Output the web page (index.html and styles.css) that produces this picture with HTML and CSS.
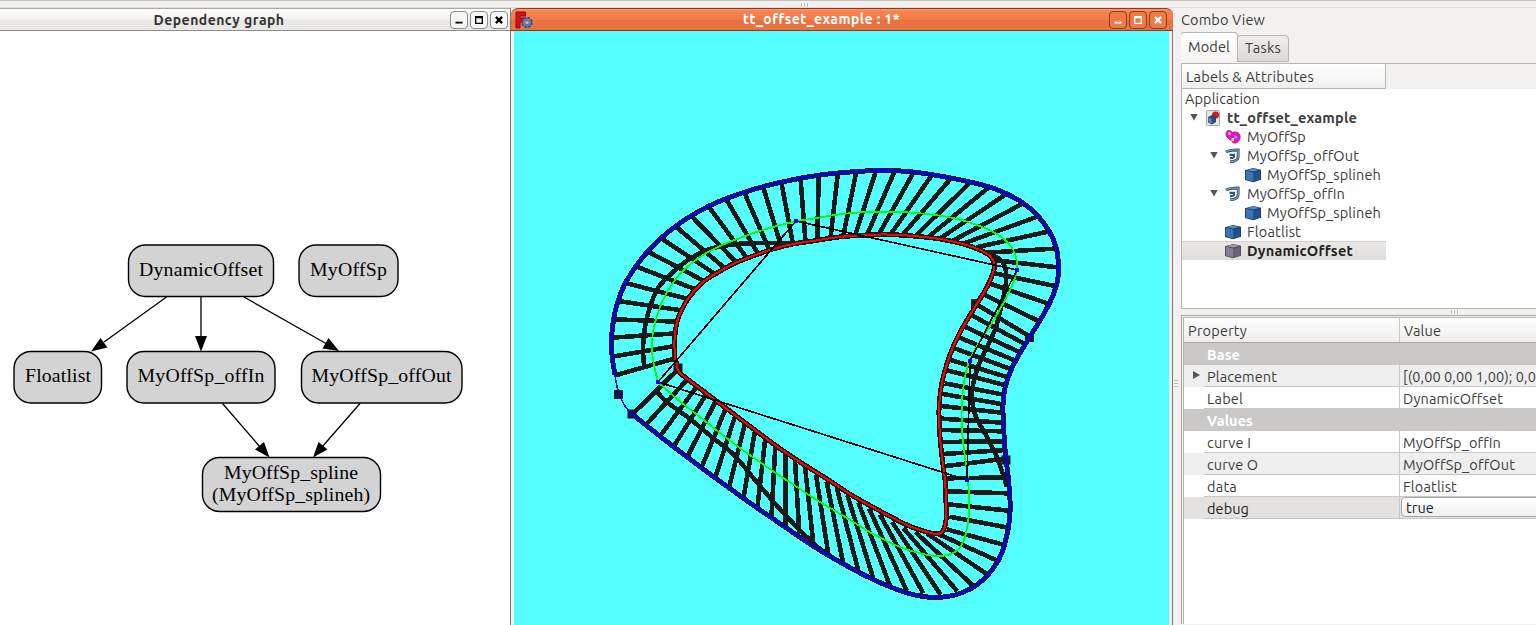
FILE: index.html
```html
<!DOCTYPE html>
<html lang="en">
<head>
<meta charset="utf-8">
<title>tt_offset_example</title>
<link rel="stylesheet" href="styles.css">
</head>
<body>
<svg class="defs" width="0" height="0">
  <defs>
    <symbol id="cube" viewBox="0 0 16 16"><path d="M0 3.200 8 1l8 1.700v10L8 15.200 0 13z" fill="#16386b"/><path d="M.8 3.800 8.500 5.400V14.400L.8 12.500z" fill="#3d74b5"/><path d="M9.200 5.400 15.300 3.600v8.800L9.200 14.400z" fill="#24508c"/><path d="M1.500 3.200 8 1.600l6.300 1.300L8.600 4.600z" fill="#5b8cc4"/></symbol>
    <symbol id="cube-off" viewBox="0 0 16 16"><path d="M0 3.200 8 1l8 1.700v10L8 15.200 0 13z" fill="#4d4459"/><path d="M.8 3.800 8.500 5.400V14.400L.8 12.500z" fill="#867f94"/><path d="M9.200 5.400 15.300 3.600v8.800L9.200 14.400z" fill="#6b627a"/><path d="M1.500 3.200 8 1.600l6.300 1.300L8.600 4.600z" fill="#a19bad"/></symbol>
    <symbol id="offset" viewBox="0 0 16 16"><g fill="none" stroke="#34557f" stroke-width="2.800"><path d="M1 4.200C4 1.900 8 1.900 13.200 2v6.500c0 3.500-3 5.200-8.200 5.200"/><path d="M4.500 6.800H9V8.500c0 1.300-1.500 1.600-4 1.600" stroke-width="2.200"/></g><g fill="none" stroke="#8ba9c9" stroke-width="1"><path d="M1 4.200C4 1.900 8 1.900 13.200 2v6.500c0 3.500-3 5.200-8.200 5.200"/></g></symbol>
    <symbol id="heart" viewBox="0 0 16 16"><path d="M1 5C1 1 5 .5 7.500 3.500 11 2 16 4 15 9c-.5 4-4 5.500-6.500 5C7 11 1 9.500 1 5z" fill="#f0d" stroke="#8b3a5a"/><circle cx="4.500" cy="4.500" r="1.500" fill="#f7c8a0"/><path d="M6.500 9h2.500v3H6.500z" fill="#ffe02a"/><path d="M10 6l3 2-2 2-2-1z" fill="#35c5f2"/></symbol>
    <symbol id="doc" viewBox="0 0 16 16"><rect x="1.500" y=".5" width="13" height="15" rx="1" fill="#e6e6e6" stroke="#a3a3a3"/><circle cx="10.500" cy="5" r="3.500" fill="#d8141c"/><path d="M3 7l4-2 4 2v5l-4 2.500L3 12.500z" fill="#2a4a7c"/><path d="M3.500 7.300 6.500 8.500v4.800l-3-1.300z" fill="#5a8bc4"/></symbol>
    <symbol id="app" viewBox="0 0 18 18"><path d="M1 1h9.500v4H5v2h4v4H5v6H1z" fill="#d41313" stroke="#8d0d0d"/><circle cx="12" cy="11.500" r="4.800" fill="none" stroke="#2e4d85" stroke-width="2" stroke-dasharray="2.200 1.570"/><circle cx="12" cy="11.500" r="3.300" fill="none" stroke="#2e4d85" stroke-width="3"/><circle cx="12" cy="11.500" r="3.200" fill="none" stroke="#5b87c8" stroke-width="1.700"/><circle cx="12" cy="11.500" r="1.700" fill="#f3a27e"/></symbol>
    <symbol id="min" viewBox="0 0 18 18"><path d="M5 12h8" stroke="currentColor" stroke-width="2"/></symbol>
    <symbol id="max" viewBox="0 0 18 18"><path d="M4.500 4.500h9v9h-9zM6 7v5h6V7z" fill="currentColor" fill-rule="evenodd"/></symbol>
    <symbol id="close" viewBox="0 0 18 18"><path d="M5.500 5.500l7 7M12.500 5.500l-7 7" stroke="currentColor" stroke-width="2.500"/></symbol>
  </defs>
</svg>

<main class="desktop">
  <div class="topstrip"><i class="grip"></i></div>
  <section class="window graph">
    <header class="titlebar"><h1 class="caption"><span class="t" data-w="131">Dependency graph</span></h1>
      <div class="buttons"><svg class="btn"><use href="#min"/></svg><svg class="btn"><use href="#max"/></svg><svg class="btn"><use href="#close"/></svg></div>
    </header>
    <svg class="canvas" viewBox="0 31 510 594">
      <g class="box"><rect x="128.500" y="245" width="145" height="51.500" rx="17"/><rect x="299" y="245" width="99" height="51.500" rx="17"/><rect x="14" y="351.500" width="87.500" height="51.500" rx="17"/><rect x="127" y="351.500" width="148" height="51.500" rx="17"/><rect x="301.500" y="351.500" width="160.500" height="51.500" rx="17"/><rect x="202.500" y="457.500" width="178" height="54" rx="17"/></g>
      <g class="edge"><path d="M166.500 297 104 342M201 297V337M244 297 326 343.500M222.500 403.500 260 447M360 403.500 322 447"/></g>
      <g class="arrow"><path d="M91 351.500 100.500 338 107.500 347.500zM195 336h12L201 351.500zM339 351 322.500 348.500 328.500 338zM269.500 457.500 255 449.500 264 442zM313 457.500 318.500 442 327.500 449.500z"/></g>
      <g class="label"><text x="201" y="276" textLength="124">DynamicOffset</text><text x="348.500" y="276" textLength="77">MyOffSp</text><text x="58" y="382" textLength="66">Floatlist</text><text x="201" y="382" textLength="127">MyOffSp_offIn</text><text x="381.500" y="382" textLength="140">MyOffSp_offOut</text><text x="291" y="479" textLength="134">MyOffSp_spline</text><text x="291" y="500.500" textLength="158">(MyOffSp_splineh)</text></g>
    </svg>
  </section>

  <section class="window view">
    <header class="titlebar active"><svg class="appicon"><use href="#app"/></svg><h1 class="caption"><span class="t" data-w="157">tt_offset_example : 1*</span></h1>
      <div class="buttons"><svg class="btn"><use href="#min"/></svg><svg class="btn"><use href="#max"/></svg><svg class="btn"><use href="#close"/></svg></div>
    </header>
    <div class="frame"><svg class="canvas scene" id="scene" viewBox="514 31 655 594"></svg></div>
  </section>

  <div class="splitter"><i class="grip vertical"></i></div>

  <aside class="combo">
    <h2 class="dock-title"><span class="t" data-w="84">Combo View</span></h2>
    <nav class="tabs"><div class="tab on"><span class="t" data-w="42">Model</span></div><div class="tab"><span class="t" data-w="36">Tasks</span></div></nav>
    <div class="tree">
      <div class="tree-head"><div class="col"><span class="t" data-w="128">Labels &amp; Attributes</span></div></div>
      <ul class="rows">
        <li class="row l0"><span class="t" data-w="75">Application</span></li>
        <li class="row l1"><i class="down"></i><svg class="ic"><use href="#doc"/></svg><b class="t" data-w="130">tt_offset_example</b></li>
        <li class="row l2"><i class="none"></i><svg class="ic"><use href="#heart"/></svg><span class="t" data-w="59">MyOffSp</span></li>
        <li class="row l2"><i class="down"></i><svg class="ic"><use href="#offset"/></svg><span class="t" data-w="112">MyOffSp_offOut</span></li>
        <li class="row l3"><i class="none"></i><svg class="ic"><use href="#cube"/></svg><span class="t" data-w="114">MyOffSp_splineh</span></li>
        <li class="row l2"><i class="down"></i><svg class="ic"><use href="#offset"/></svg><span class="t" data-w="98">MyOffSp_offIn</span></li>
        <li class="row l3"><i class="none"></i><svg class="ic"><use href="#cube"/></svg><span class="t" data-w="114">MyOffSp_splineh</span></li>
        <li class="row l2"><i class="none"></i><svg class="ic"><use href="#cube"/></svg><span class="t" data-w="54">Floatlist</span></li>
        <li class="row l2 selected"><i class="none"></i><svg class="ic"><use href="#cube-off"/></svg><b class="t" data-w="106">DynamicOffset</b></li>
      </ul>
    </div>
    <div class="hsplit"><i class="grip"></i></div>
    <div class="props">
      <div class="prow head"><div class="name"><span class="t" data-w="59">Property</span></div><div class="value"><span class="t" data-w="37">Value</span></div></div>
      <div class="prow group"><b class="t" data-w="33">Base</b></div>
      <div class="prow alt"><i class="right"></i><div class="name"><span class="t" data-w="70">Placement</span></div><div class="value"><span class="t" data-w="133">[(0,00 0,00 1,00); 0,0</span></div></div>
      <div class="prow"><div class="name"><span class="t" data-w="36">Label</span></div><div class="value"><span class="t" data-w="100">DynamicOffset</span></div></div>
      <div class="prow group"><b class="t" data-w="46">Values</b></div>
      <div class="prow"><div class="name"><span class="t" data-w="44">curve I</span></div><div class="value"><span class="t" data-w="98">MyOffSp_offIn</span></div></div>
      <div class="prow alt"><div class="name"><span class="t" data-w="51">curve O</span></div><div class="value"><span class="t" data-w="112">MyOffSp_offOut</span></div></div>
      <div class="prow"><div class="name"><span class="t" data-w="30">data</span></div><div class="value"><span class="t" data-w="54">Floatlist</span></div></div>
      <div class="prow current"><div class="name"><span class="t" data-w="42">debug</span></div><div class="value"><div class="combo-box"><span class="t" data-w="28">true</span></div></div></div>
    </div>
  </aside>
</main>
<script src="scene.js"></script>
</body>
</html>
```
FILE: styles.css
```css
* { box-sizing: border-box; }
body { margin: 0; width: 1536px; height: 625px; overflow: hidden; background: #f2f1f0; color: #3c3c3c; font: 14.500px/19px Ubuntu, "Noto Sans", sans-serif; }
.defs { display: block; height: 0; }
.desktop { display: grid; grid-template: 8px 617px / 511px 662px 8px 355px; }
.topstrip { grid-column: 1 / -1; border-bottom: 1px solid #dedbd8; box-shadow: inset 0 1px #c4c0bb; display: flex; padding: 3px 0 0 801px; }
.grip { display: block; width: 8px; height: 4px; background: repeating-linear-gradient(90deg, #bdb9b5 0 1px, #fafafa 1px 3px); }
.grip.vertical { width: 4px; height: 8px; background: repeating-linear-gradient(#bdb9b5 0 1px, #fafafa 1px 3px); }
.t { display: inline-block; white-space: pre; }

.window { display: flex; flex-direction: column; overflow: hidden; }
.graph { background: #fff; border-right: 1px solid #777; }
.titlebar { height: 23px; flex: none; display: flex; align-items: center; background: linear-gradient(#fff, #f4f3f2 48%, #eae9e7 52%, #e9e8e6); border-top: 1px solid #aaa; border-bottom: 1px solid #8e8e8e; color: #333; }
.caption { flex: 1; margin: 0; font: bold 14px/20px Ubuntu, "Noto Sans", sans-serif; text-align: center; }
.graph .caption { padding-right: 12px; }
.buttons { display: flex; gap: 2px; padding-right: 2px; }
.btn { width: 18px; height: 18px; border: 1px solid #8c8c8c; border-radius: 4px; background: #f7f7f6; color: #000; }
.titlebar.active { border-color: #8d3b1b; border-radius: 7px 7px 0 0; background: linear-gradient(#ff9a6a, #f7814f 12%, #f17c4b 50%, #e87140 52%, #e87442); color: #fff; }
.view .btn { background: #ed7b49; border-color: #8f3c1c; color: #fff; }
.view .buttons { padding-right: 6px; }
.view .caption { padding: 0 0 2px 1px; }
.appicon { width: 18px; height: 18px; margin-left: 4px; }
.canvas { display: block; width: 510px; height: 594px; flex: none; }
.frame { padding: 0 3px; background: #f2f1f0; border-right: 1px solid #777; }
.scene { width: 655px; background: #55ffff; }

.box rect { fill: #d3d3d3; stroke: #000; stroke-width: 1.400; }
.edge path { fill: none; stroke: #000; stroke-width: 1.300; }
.label text { font: 19.800px "Liberation Serif", serif; text-anchor: middle; fill: #000; }

.scene path { fill: none; }
.ribs, .mid { stroke: #1a1a1a; stroke-width: 4.600; shape-rendering: crispEdges; }
.edge-dark { stroke: #1a1a1a; stroke-width: 5; shape-rendering: crispEdges; }
.outer { stroke: #0000ff; stroke-width: 2.300; shape-rendering: crispEdges; }
.outer.thin { stroke-width: 1.500; }
.inner { stroke: #ff0000; stroke-width: 2; shape-rendering: crispEdges; }
.spline { stroke: #00ff00; stroke-width: 1.800; shape-rendering: crispEdges; }
.poly { stroke: #000; stroke-width: 1.700; shape-rendering: crispEdges; }
.marker { fill: #1a1a1a; }
.dot { fill: #0000ff; }

.splitter { display: flex; align-items: center; padding: 134px 0 0 1px; }
.combo { display: flex; flex-direction: column; min-width: 0; overflow: hidden; }
.dock-title { margin: 0; height: 24px; flex: none; padding: 2px 0 0; font: inherit; }
.tabs { display: flex; align-items: flex-end; height: 30px; flex: none; margin-left: -1px; }
.tab { height: 27px; border: 1px solid #b9b6b2; border-radius: 4px 4px 0 0; background: linear-gradient(#eeedec, #dcdad8); padding: 2px 7px; width: 52px; }
.tab.on { height: 30px; width: 58px; background: linear-gradient(#fff, #f4f3f2); border-bottom: 0; padding: 4px 7px; margin-right: -1px; }
.tree { height: 246px; flex: none; margin-top: 1px; border: 1px solid #b9b6b2; border-right: 0; background: #fff; }
.tree-head { height: 25px; background: #f2f1f0; display: flex; }
.col { width: 204px; padding: 3px 4px; background: linear-gradient(#fff, #f0efee); border: 0 solid #b9b6b2; border-width: 0 1px 1px 0; }
.rows { list-style: none; margin: 0; padding: 0; width: 204px; }
.row { display: flex; align-items: center; height: 19px; }
.row .t { padding-bottom: 1px; }
.l0 { padding-left: 3px; } .l1 { padding-left: 3px; } .l2 { padding-left: 23px; } .l3 { padding-left: 43px; }
.selected { background: linear-gradient(#eae9e8, #dfdedc); color: #222; box-shadow: inset 0 1px #d2d0ce; }
.ic { width: 16px; height: 16px; margin-right: 6px; flex: none; }
.down, .none { width: 20px; height: 8px; flex: none; }
.down::before { content: ""; display: block; width: 8px; height: 7px; margin-left: 5px; background: #555; clip-path: polygon(0 0, 100% 0, 50% 100%); }
.hsplit { height: 6px; flex: none; padding: 1px 0 0 270px; }
.props { flex: none; height: 309px; border: 1px solid #aaa7a3; border-width: 1px 0 0 1px; background: #fff; box-shadow: inset 1px 1px #f2f1f0, inset 2px 2px #b9b6b2; padding: 2px 0 0 2px; }
.prow { display: flex; height: 22px; }
.name { width: 196px; margin-left: 20px; padding: 2px 3px 0; border-right: 1px solid #cac8c6; border-bottom: 1px solid #cac8c6; }
.value { flex: 1; min-width: 0; padding: 2px 3px 0; border-bottom: 1px solid #cac8c6; }
.head { height: 25px; background: linear-gradient(#fff, #efeeed); border-bottom: 1px solid #aaa7a3; }
.head .name { width: 216px; margin-left: 0; padding: 3px 4px 0; border-bottom: 0; }
.head .value { padding: 3px 4px 0; border: 0; }
.group { background: #cac9c8; color: #fff; padding: 2px 0 0 23px; }
.alt { background: #efefef; }
.current { background: #e3e2e1; color: #222; }
.current .value { padding: 0 0 0 1px; overflow: hidden; }
.right { width: 7px; height: 8px; margin: 6px -16px 0 9px; background: #555; clip-path: polygon(0 0, 100% 50%, 0 100%); }
.combo-box { height: 20px; width: 150px; border: 1px solid #aaa7a3; border-radius: 4px; background: linear-gradient(#fff, #f0efee); padding-left: 4px; line-height: 19px; }
```
FILE: scene.js
```js
// Rung end points: outer x, outer y, inner x, inner y in thirds of a pixel.
const RIBS = [
  [600, 160, [46,646,226,595, 38,590,224,558, 36,533,228,520, 42,478,232,485, 55,423,244,451, 80,370,268,418, 110,320,292,390, 146,276,318,366, 184,235,348,344, 228,200,376,326, 276,170,408,306, 328,143,440,293, 380,120,474,281, 434,100,508,270, 490,83,543,257, 545,72,578,248, 602,60,616,240, 656,50,652,234, 713,44,692,230]],
  [820, 160, [108,40,70,226, 166,38,106,224, 222,38,142,222, 278,42,178,220, 335,46,214,220, 392,56,250,222, 450,68,288,226, 504,84,326,230, 556,104,362,234, 606,132,398,242, 652,170,432,250, 684,215,468,262, 704,266,500,278, 712,322,520,300, 704,378,524,340, 682,430,508,370, 654,482,488,402, 630,530,465,430, 614,552,452,464, 602,578,430,498, 586,602,412,530, 574,628,396,562, 564,652,386,598, 558,676,378,630]],
  [800, 370, [606,73,434,40, 604,102,428,72, 604,128,424,108, 606,158,424,146, 610,184,424,180, 612,214,424,216, 616,240,430,252, 626,265,438,288, 620,322,440,325, 624,370,444,364, 626,422,444,403, 620,472,448,440, 610,524,440,478, 592,572,410,490, 560,612,380,490, 518,646,346,486, 472,664,310,474, 422,674,276,456, 370,670,240,434, 320,662,207,415, 270,648,175,397, 222,632,142,375, 176,606,110,352, 130,582,80,336, 85,552,48,314, 40,520,15,290]],
  [600, 350, [598,552,585,330, 556,530,556,308, 514,506,526,288, 472,474,496,264, 430,446,464,248, 388,410,434,224, 346,382,404,202, 304,354,376,178, 262,320,346,156, 222,288,318,134, 182,256,290,110, 140,222,262,88, 97,193,232,60]]
];
const OUTER = [632,414, 647,426, 687,457, 743,498, 785,527, 813,546, 840,562, 866,576, 893,588, 915,595, 935,597.500, 955,595, 972,588, 986,577, 998,561, 1005,543, 1009.500,520, 1010,500, 1008,475, 1005.500,455, 1003.500,425, 1003,405, 1005,388, 1011,370, 1020,353, 1031,335, 1042,317, 1051,300, 1057,283, 1058.500,266, 1056,247, 1049,231, 1038,216, 1023,203, 1007,194, 988,186.500, 951,178, 913,172, 885,170.500, 857,171.500, 820,175, 782,182, 745,192, 709,206, 676,226, 649,250, 627,280, 616,308, 611.500,337, 612,355, 615,375];
const INNER = [675,358, 674.500,340, 677,322, 682,309, 690,296, 703,282, 717,273, 733,264, 753,256, 773,249, 793,244, 813,241, 839,237, 867,235, 887,234.500, 913,236, 940,239, 963,244, 980,250, 990,256, 994.500,264, 993,273, 987,287, 975,307, 963,327, 953,347, 946,367, 941,388, 939,410, 940,437, 942,457, 945,480, 946,503, 946,520, 943,531, 937,534, 927,532, 907,525, 880,511, 853,496, 827,479, 800,462, 775,445, 735,415, 706,393, 680,373, 677,365, 675,358];
const SPLINE = [658,382, 653,360, 652,343, 654,327, 660,307, 667,292, 675,280, 687,267, 703,255, 720,246, 740,238, 763,230, 793,222, 817,218, 842,214, 867,212, 900,212, 927,214, 953,218, 977,225, 997,234, 1010,245, 1016,257, 1017,270, 1010,290, 992,323, 980,341, 970,359, 965,377, 962,400, 962,430, 965,457, 968,480, 969,503, 968,523, 963,542, 955,552, 940,556, 923,554, 900,547, 873,534, 847,518, 820,502, 800,489, 767,467, 733,443, 700,417, 677,399, 658,382];
const MID = [
  [644,366, 643,347, 645,327, 650,307, 658,288, 672,273, 688,260, 710,249, 737,244, 767,243, 792,243],
  [986,253, 998,258, 1005,267, 1006,283, 1002,303, 996,327, 987,347, 978,367, 973,385, 972,400, 976,417, 987,437, 998,460, 1007,487],
  [657,392, 667,402, 690,419, 713,438, 734,455, 760,486, 787,517, 813,543, 828,555]
];
const MARKERS = [[618.5,394.5], [632,414], [678,368], [975.5,303.5], [1029.5,337.5], [1006,460]];
const POLES = [[658,382], [796,221], [1017,270], [970,361], [967,480]];

// Catmull-Rom interpolation of a flat coordinate list as cubic segments.
function smooth(c) {
  const n = c.length / 2;
  const p = i => { const k = Math.max(0, Math.min(n - 1, i)); return [c[2 * k], c[2 * k + 1]]; };
  let d = `M${p(0)}`;
  for (let i = 0; i < n - 1; i++) {
    const [a, b, e, f] = [p(i - 1), p(i), p(i + 1), p(i + 2)];
    d += `C${b[0] + (e[0] - a[0]) / 6} ${b[1] + (e[1] - a[1]) / 6} ${e[0] - (f[0] - b[0]) / 6} ${e[1] - (f[1] - b[1]) / 6} ${e}`;
  }
  return d;
}
const path = (cls, d) => `<path class="${cls}" d="${d}"/>`;
let ribs = '';
for (const [x, y, v] of RIBS)
  for (let i = 0; i < v.length; i += 4)
    ribs += `M${x + v[i] / 3} ${y + v[i + 1] / 3}L${x + v[i + 2] / 3} ${y + v[i + 3] / 3}`;
const squares = (cls, list, s) => list.map(([x, y]) => `<rect class="${cls}" x="${x - s / 2}" y="${y - s / 2}" width="${s}" height="${s}"/>`).join('');
document.getElementById('scene').innerHTML =
  path('ribs', ribs) + MID.map(m => path('mid', smooth(m))).join('') +
  path('edge-dark', smooth(OUTER)) + path('edge-dark', smooth(INNER)) +
  squares('marker', MARKERS, 9) +
  path('outer', smooth(OUTER)) + path('outer thin', 'M615 375Q618 402 632 414') +
  path('inner', smooth(INNER)) + path('spline', smooth(SPLINE)) +
  path('poly', 'M' + POLES.join('L') + 'Z') + squares('dot', POLES, 4);

for (const el of document.querySelectorAll('.t')) {
  const gap = (el.dataset.w - el.getBoundingClientRect().width) / el.textContent.length;
  el.style.letterSpacing = gap.toFixed(3) + 'px';
}
```
